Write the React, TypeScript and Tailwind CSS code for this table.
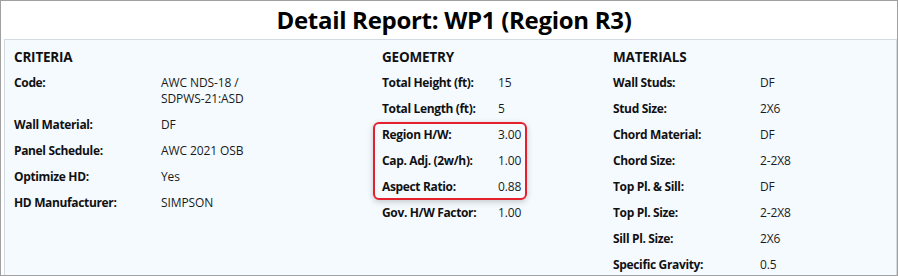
import React from "react";

type Row = { label: string; value: React.ReactNode };

const criteria: Row[] = [
  {
    label: "Code:",
    value: (
      <>
        <span className="block">AWC NDS-18 /</span>
        <span className="block">SDPWS-21:ASD</span>
      </>
    ),
  },
  { label: "Wall Material:", value: "DF" },
  { label: "Panel Schedule:", value: "AWC 2021 OSB" },
  { label: "Optimize HD:", value: "Yes" },
  { label: "HD Manufacturer:", value: "SIMPSON" },
];

const geoTop: Row[] = [
  { label: "Total Height (ft):", value: "15" },
  { label: "Total Length (ft):", value: "5" },
];
const geoBox: Row[] = [
  { label: "Region H/W:", value: "3.00" },
  { label: "Cap. Adj. (2w/h):", value: "1.00" },
  { label: "Aspect Ratio:", value: "0.88" },
];
const geoBottom: Row[] = [{ label: "Gov. H/W Factor:", value: "1.00" }];

const materials: Row[] = [
  { label: "Wall Studs:", value: "DF" },
  { label: "Stud Size:", value: "2X6" },
  { label: "Chord Material:", value: "DF" },
  { label: "Chord Size:", value: "2-2X8" },
  { label: "Top Pl. & Sill:", value: "DF" },
  { label: "Top Pl. Size:", value: "2-2X8" },
  { label: "Sill Pl. Size:", value: "2X6" },
  { label: "Specific Gravity:", value: "0.5" },
];

function Item({ row, labelW }: { row: Row; labelW: string }) {
  return (
    <div className="flex leading-[16px] text-[12px]">
      <div className={`${labelW} shrink-0 font-bold tracking-[-0.35px] text-[#111]`}>{row.label}</div>
      <div className="tracking-[-0.1px]">{row.value}</div>
    </div>
  );
}

function Header({ children }: { children: React.ReactNode }) {
  return (
    <div className="leading-[16px] text-[13.5px] font-bold tracking-[-0.2px] text-[#111]">
      {children}
    </div>
  );
}

export default function App() {
  return (
    <div
      className="w-[898px] h-[276px] border border-[#a0a0a0] bg-white overflow-hidden flex flex-col text-[#1a1a1a]"
      style={{ fontFamily: '"Open Sans", "Noto Sans", sans-serif' }}
    >
      <div className="h-[38px] shrink-0 flex items-center justify-center pl-[10px] text-[24px] font-bold tracking-[-0.3px] text-black leading-none">
        Detail Report: WP1 (Region R3)
      </div>
      <div className="flex-1 ml-[3px] border-l border-t border-r border-[#d3dae2] bg-[#f5faff] pl-[9px] pt-[9px] grid grid-cols-[368px_231px_1fr]">
        <div className="flex flex-col gap-[10px]">
          <Header>CRITERIA</Header>
          {criteria.map((r) => (
            <Item key={r.label} row={r} labelW="w-[147px]" />
          ))}
        </div>
        <div className="flex flex-col gap-[10px]">
          <Header>GEOMETRY</Header>
          {geoTop.map((r) => (
            <Item key={r.label} row={r} labelW="w-[116px]" />
          ))}
          <div className="-my-[5px] -ml-[9px] w-[154px] border-2 border-[#e3202b] rounded-[6px] pl-[7px] py-[3px] flex flex-col gap-[10px] shadow-[0_2px_6px_rgba(0,0,0,0.2)]">
            {geoBox.map((r) => (
              <Item key={r.label} row={r} labelW="w-[116px]" />
            ))}
          </div>
          {geoBottom.map((r) => (
            <Item key={r.label} row={r} labelW="w-[116px]" />
          ))}
        </div>
        <div className="flex flex-col gap-[10px]">
          <Header>MATERIALS</Header>
          {materials.map((r) => (
            <Item key={r.label} row={r} labelW="w-[147px]" />
          ))}
        </div>
      </div>
    </div>
  );
}
